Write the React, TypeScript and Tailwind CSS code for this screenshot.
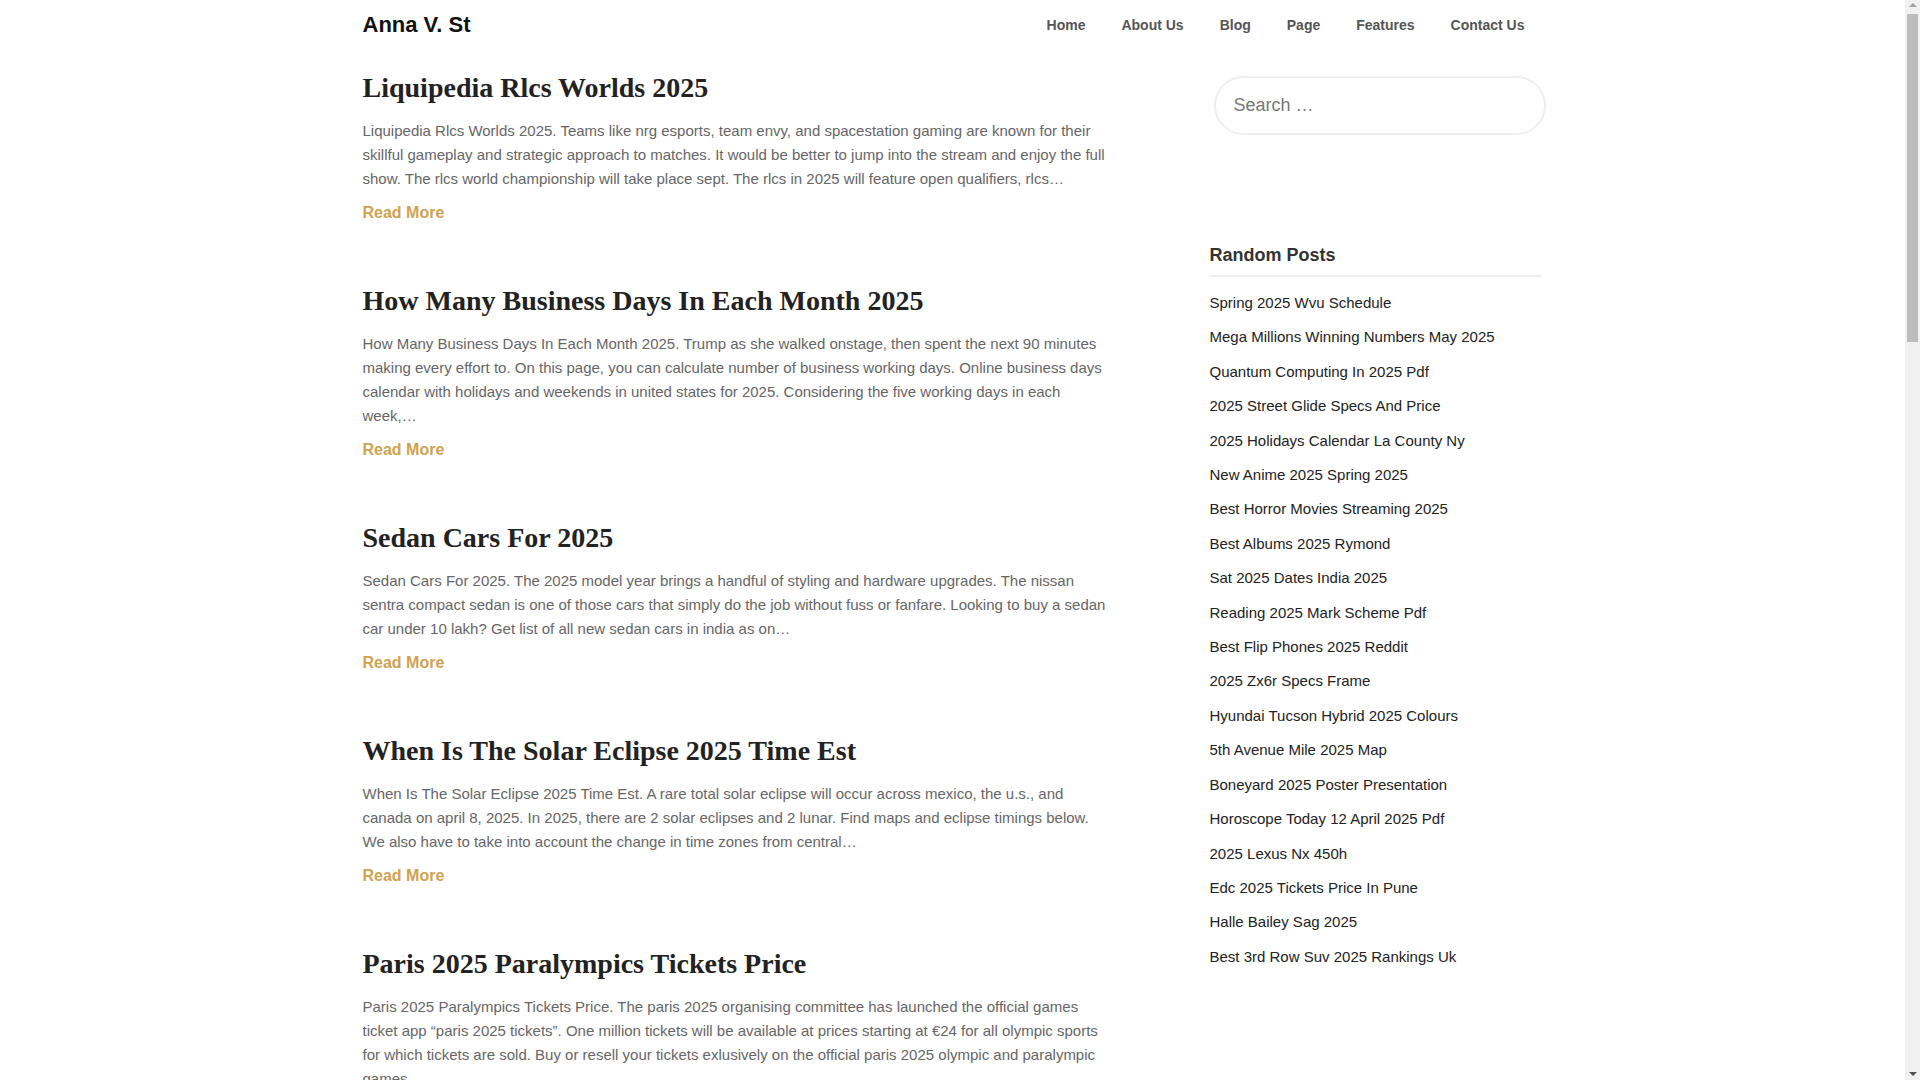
const posts = [
  {
    title: 'Liquipedia Rlcs Worlds 2025',
    excerpt:
      'Liquipedia Rlcs Worlds 2025. Teams like nrg esports, team envy, and spacestation gaming are known for their skillful gameplay and strategic approach to matches. It would be better to jump into the stream and enjoy the full show. The rlcs world championship will take place sept. The rlcs in 2025 will feature open qualifiers, rlcs…',
  },
  {
    title: 'How Many Business Days In Each Month 2025',
    excerpt:
      'How Many Business Days In Each Month 2025. Trump as she walked onstage, then spent the next 90 minutes making every effort to. On this page, you can calculate number of business working days. Online business days calendar with holidays and weekends in united states for 2025. Considering the five working days in each week,…',
  },
  {
    title: 'Sedan Cars For 2025',
    excerpt:
      'Sedan Cars For 2025. The 2025 model year brings a handful of styling and hardware upgrades. The nissan sentra compact sedan is one of those cars that simply do the job without fuss or fanfare. Looking to buy a sedan car under 10 lakh? Get list of all new sedan cars in india as on…',
  },
  {
    title: 'When Is The Solar Eclipse 2025 Time Est',
    excerpt:
      'When Is The Solar Eclipse 2025 Time Est. A rare total solar eclipse will occur across mexico, the u.s., and canada on april 8, 2025. In 2025, there are 2 solar eclipses and 2 lunar. Find maps and eclipse timings below. We also have to take into account the change in time zones from central…',
  },
  {
    title: 'Paris 2025 Paralympics Tickets Price',
    excerpt:
      'Paris 2025 Paralympics Tickets Price. The paris 2025 organising committee has launched the official games ticket app “paris 2025 tickets”. One million tickets will be available at prices starting at €24 for all olympic sports for which tickets are sold. Buy or resell your tickets exlusively on the official paris 2025 olympic and paralympic games.',
  },
];

const randomPosts = [
  'Spring 2025 Wvu Schedule',
  'Mega Millions Winning Numbers May 2025',
  'Quantum Computing In 2025 Pdf',
  '2025 Street Glide Specs And Price',
  '2025 Holidays Calendar La County Ny',
  'New Anime 2025 Spring 2025',
  'Best Horror Movies Streaming 2025',
  'Best Albums 2025 Rymond',
  'Sat 2025 Dates India 2025',
  'Reading 2025 Mark Scheme Pdf',
  'Best Flip Phones 2025 Reddit',
  '2025 Zx6r Specs Frame',
  'Hyundai Tucson Hybrid 2025 Colours',
  '5th Avenue Mile 2025 Map',
  'Boneyard 2025 Poster Presentation',
  'Horoscope Today 12 April 2025 Pdf',
  '2025 Lexus Nx 450h',
  'Edc 2025 Tickets Price In Pune',
  'Halle Bailey Sag 2025',
  'Best 3rd Row Suv 2025 Rankings Uk',
];

const nav = ['Home', 'About Us', 'Blog', 'Page', 'Features', 'Contact Us'];

function Scrollbar() {
  return (
    <div className="flex w-[15px] shrink-0 flex-col items-center bg-[#f1f1f1]">
      <div className="mt-[3px] h-0 w-0 border-x-[4px] border-b-[4px] border-x-transparent border-b-[#a3a3a3]" />
      <div className="mt-[7px] h-[328px] w-[11px] bg-[#bcbcbc]" />
      <div className="flex-1" />
      <div className="mb-[4px] h-0 w-0 border-x-[4px] border-t-[4px] border-x-transparent border-t-[#505050]" />
    </div>
  );
}

export default function App() {
  return (
    <div className="flex h-screen overflow-hidden bg-white font-['Liberation_Sans',Arial,sans-serif]">
      <div className="flex-1">
        <header className="mx-auto flex h-[50px] w-[1180px] items-center justify-between">
          <a className="text-[22px] font-bold leading-none text-[#111]">Anna V. St</a>
          <nav className="flex">
            {nav.map((item) => (
              <a key={item} className="px-[18px] text-[14px] font-bold leading-5 text-[#555]">
                {item}
              </a>
            ))}
          </nav>
        </header>

        <div className="mx-auto flex w-[1180px] justify-between">
          <main className="w-[748px] pt-[21px]">
            {posts.map((post) => (
              <article key={post.title} className="mb-[59px]">
                <h2 className="mb-[14px] font-['Liberation_Serif','Times_New_Roman',serif] text-[28px] font-bold leading-[34px] text-[#222]">
                  {post.title}
                </h2>
                <p className="text-[15px] leading-6 text-[#666]">{post.excerpt}</p>
                <a className="mt-[10px] block text-[16px] font-bold leading-6 text-[#d0a24f]">Read More</a>
              </article>
            ))}
          </main>

          <aside className="w-[333px] pt-[26px]">
            <div className="-mr-[3px] ml-[4px] flex h-[59px] items-center rounded-full border-2 border-[#eeeeee] px-[18px]">
              <span className="text-[18px] text-[#777]">Search …</span>
            </div>

            <section className="mr-[2px] mt-[108px]">
              <h3 className="border-b-2 border-[#eeeeee] pb-[8px] text-[18px] font-bold leading-6 text-[#333]">
                Random Posts
              </h3>
              <ul className="mt-[9px]">
                {randomPosts.map((p) => (
                  <li key={p} className="text-[15px] leading-[34.4px] text-[#222]">
                    <a>{p}</a>
                  </li>
                ))}
              </ul>
            </section>
          </aside>
        </div>
      </div>
      <Scrollbar />
    </div>
  );
}
